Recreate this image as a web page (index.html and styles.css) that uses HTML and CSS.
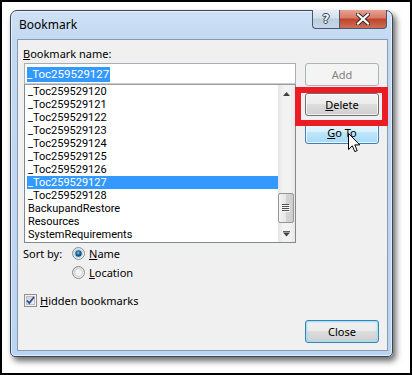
FILE: index.html
```html
<!DOCTYPE html>
<html>
<head>
<meta charset="utf-8">
<link rel="stylesheet" href="styles.css">
</head>
<body>
<div class="screen">
  <div class="window">
    <div class="titlebar">
      <span class="title">Bookmark</span>
      <div class="caption">
        <div class="cap help"><span class="qmark">?</span></div>
        <div class="cap close">
          <svg width="14" height="12" viewBox="0 0 14 12">
            <path d="M2 1.5 L12 10.5 M12 1.5 L2 10.5" stroke="#3a2a2a" stroke-width="4.2" stroke-linecap="square"/>
            <path d="M2 1.5 L12 10.5 M12 1.5 L2 10.5" stroke="#ffffff" stroke-width="2.2" stroke-linecap="square"/>
          </svg>
        </div>
      </div>
    </div>
    <div class="panel">
      <div class="name-label"><u>B</u>ookmark name:</div>
      <div class="spacer"></div>
      <div class="left">
        <div class="edit"><span class="sel">_Toc259529127</span></div>
        <div class="listbox">
          <ul class="items">
            <li>_Toc259529120</li>
            <li>_Toc259529121</li>
            <li>_Toc259529122</li>
            <li>_Toc259529123</li>
            <li>_Toc259529124</li>
            <li>_Toc259529125</li>
            <li>_Toc259529126</li>
            <li class="selected">_Toc259529127</li>
            <li>_Toc259529128</li>
            <li>BackupandRestore</li>
            <li>Resources</li>
            <li>SystemRequirements</li>
          </ul>
          <div class="scrollbar">
            <div class="arrow">
              <svg width="9" height="6" viewBox="0 0 9 6"><path d="M4.5 1 L8 5 L1 5 Z" fill="#404040"/></svg>
            </div>
            <div class="track">
              <div class="thumb">
                <svg width="8" height="8" viewBox="0 0 8 8">
                  <path d="M0 0.5 H7 M0 2.5 H7 M0 4.5 H7 M0 6.5 H7" stroke="#505050" stroke-width="1"/>
                  <path d="M1 1.5 H8 M1 3.5 H8 M1 5.5 H8 M1 7.5 H8" stroke="#ffffff" stroke-width="1" opacity="0.8"/>
                </svg>
              </div>
            </div>
            <div class="arrow">
              <svg width="9" height="6" viewBox="0 0 9 6"><path d="M1 0.5 H8" stroke="#606060"/><path d="M1 1.5 L8 1.5 L4.5 5.5 Z" fill="#404040"/></svg>
            </div>
          </div>
        </div>
        <div class="sort">
          <span class="sort-label">Sort by:</span>
          <div class="radios">
            <div class="opt">
              <svg class="radio" width="13" height="13" viewBox="0 0 13 13">
                <defs>
                  <linearGradient id="rb" x1="0" y1="0" x2="1" y2="1"><stop offset="0" stop-color="#dcdcdc"/><stop offset="1" stop-color="#ffffff"/></linearGradient>
                  <radialGradient id="dot" cx="0.45" cy="0.4" r="0.6"><stop offset="0" stop-color="#8fd0f5"/><stop offset="0.45" stop-color="#1f6ea6"/><stop offset="1" stop-color="#0d3a62"/></radialGradient>
                </defs>
                <circle cx="6.5" cy="6.5" r="6" fill="url(#rb)" stroke="#8e8f8f"/>
                <circle cx="6.5" cy="6.5" r="4.2" fill="none" stroke="#b8d7ee" stroke-width="1"/>
                <circle cx="6.5" cy="6.5" r="3.2" fill="url(#dot)"/>
              </svg>
              <span><u>N</u>ame</span>
            </div>
            <div class="opt">
              <svg class="radio" width="13" height="13" viewBox="0 0 13 13">
                <defs>
                  <linearGradient id="rb2" x1="0" y1="0" x2="1" y2="1"><stop offset="0" stop-color="#d2d2d2"/><stop offset="1" stop-color="#f8f8f8"/></linearGradient>
                </defs>
                <circle cx="6.5" cy="6.5" r="6" fill="url(#rb2)" stroke="#8e8f8f"/>
                <circle cx="6.5" cy="6.5" r="4" fill="#f2f2f2" stroke="#c9c9c9" stroke-width="0.8"/>
              </svg>
              <span><u>L</u>ocation</span>
            </div>
          </div>
        </div>
        <div class="check">
          <svg width="13" height="13" viewBox="0 0 13 13">
            <defs>
              <linearGradient id="cb" x1="0" y1="0" x2="1" y2="1"><stop offset="0" stop-color="#cbcfd5"/><stop offset="1" stop-color="#f6f6f6"/></linearGradient>
            </defs>
            <rect x="0.5" y="0.5" width="12" height="12" fill="#f4f4f4" stroke="#8e8f8f"/>
            <rect x="2.5" y="2.5" width="8" height="8" fill="url(#cb)" stroke="#b9bcc1"/>
            <path d="M3 6.5 L5.3 9 L10 3" fill="none" stroke="#2f4f8f" stroke-width="1.8"/>
          </svg>
          <span><u>H</u>idden bookmarks</span>
        </div>
      </div>
      <div class="right">
        <div class="btn disabled">Add</div>
        <div class="btn delete"><span><u>D</u>elete</span></div>
        <div class="btn hover"><span><u>G</u>o To</span></div>
        <div class="btn default">Close</div>
      </div>
    </div>
  </div>
  <div class="highlight-box"></div>
  <svg class="cursor" width="13" height="20" viewBox="0 0 13 20">
    <path d="M0.5 0.5 L0.5 16.5 L4.3 12.8 L6.8 18.6 L9.2 17.6 L6.8 11.9 L11.8 11.9 Z" fill="#ffffff" stroke="#000000" stroke-width="1" stroke-linejoin="miter"/>
  </svg>
</div>
</body>
</html>
```

FILE: styles.css
```css
html, body {
  margin: 0;
  padding: 0;
  background: #ffffff;
}

.screen {
  position: relative;
  width: 412px;
  height: 375px;
  box-sizing: border-box;
  border: 2px solid #000000;
  background: #ffffff;
  padding: 8px 0 0 8px;
  font-family: "Noto Sans", "Open Sans", sans-serif;
  font-size: 11px;
  color: #000000;
  overflow: hidden;
}

.window {
  width: 383px;
  height: 347px;
  box-sizing: border-box;
  border: 1px solid #3c4654;
  border-radius: 7px 7px 5px 5px;
  background: linear-gradient(#cfe1f5, #c2d9f2 30px, #bad5f2);
  box-shadow: inset 0 0 0 1px rgba(255, 255, 255, 0.55), 3px 4px 6px rgba(0, 0, 0, 0.6);
  padding: 0 4px 5px 6px;
  display: flex;
  flex-direction: column;
}

.titlebar {
  height: 28px;
  flex: none;
  display: flex;
  justify-content: space-between;
  align-items: flex-start;
  padding-left: 2px;
}

.title {
  margin-top: 6px;
  line-height: 15px;
  font-size: 12px;
}

.caption {
  display: flex;
  margin-top: -1px;
  margin-right: 1px;
  height: 19px;
}

.cap {
  box-sizing: border-box;
  height: 19px;
  border: 1px solid #4a5869;
  border-top: none;
  display: flex;
  align-items: center;
  justify-content: center;
}

.help {
  width: 27px;
  border-right: none;
  border-radius: 0 0 0 4px;
  background: linear-gradient(#e6eef7, #d4e0ed 45%, #bccde0 50%, #c6d7ea);
}

.qmark {
  font-family: "DejaVu Sans", sans-serif;
  font-weight: bold;
  font-size: 12px;
  line-height: 12px;
  color: #f4f6f8;
  text-shadow: 1px 0 0 #33404f, -1px 0 0 #33404f, 0 1px 0 #33404f, 0 -1px 0 #33404f;
}

.close {
  width: 48px;
  border-radius: 0 0 4px 0;
  background: linear-gradient(#e7a393, #d67a66 45%, #c0432b 50%, #cf6d55);
}

.panel {
  flex: 1;
  box-sizing: border-box;
  border: 1px solid #8a9bb0;
  background: #f0f0f0;
  display: grid;
  grid-template-columns: 272px 74px;
  grid-template-rows: 15px 1fr;
  column-gap: 9px;
  row-gap: 2px;
  padding: 6px 8px 7px 6px;
}

.name-label {
  margin-left: -1px;
  line-height: 15px;
}

.left {
  display: flex;
  flex-direction: column;
}

.edit {
  height: 21px;
  box-sizing: border-box;
  border: 1px solid #abadb3;
  border-bottom-color: #c9cbd0;
  background: #ffffff;
  padding: 2px 0 0 2px;
}

.sel {
  display: inline-block;
  line-height: 15px;
  background: #3399ff;
  color: #ffffff;
  padding-right: 1px;
  font-family: Roboto, "Noto Sans", sans-serif;
  font-size: 11.5px;
}

.listbox {
  height: 159px;
  box-sizing: border-box;
  border: 1px solid #828790;
  border-top-color: #9a9ea6;
  background: #ffffff;
  display: flex;
}

.items {
  list-style: none;
  margin: 0;
  padding: 0 0 0 2px;
  flex: 1;
  font-family: Roboto, "Noto Sans", sans-serif;
  font-size: 11px;
}

.items li {
  height: 13px;
  line-height: 13px;
  padding-left: 1px;
  white-space: nowrap;
}

.items li.selected {
  background: #3399ff;
  color: #ffffff;
}

.scrollbar {
  width: 17px;
  display: flex;
  flex-direction: column;
  background: linear-gradient(90deg, #e4e4e4, #f2f2f2 30%, #f2f2f2 70%, #e8e8e8);
}

.arrow {
  height: 17px;
  display: flex;
  align-items: center;
  justify-content: center;
}

.track {
  flex: 1;
  display: flex;
  flex-direction: column;
  justify-content: flex-end;
  padding-bottom: 2px;
}

.thumb {
  height: 30px;
  box-sizing: border-box;
  margin: 0 1px 0 0;
  border: 1px solid #979797;
  border-radius: 2px;
  background: linear-gradient(90deg, #f4f4f4, #e6e6e6 50%, #d4d4d4 52%, #cdcdcd);
  display: flex;
  align-items: center;
  justify-content: center;
}

.sort {
  margin-top: 3px;
  display: flex;
  align-items: flex-start;
}

.sort-label {
  width: 49px;
  margin-left: -1px;
  line-height: 15px;
}

.radios {
  display: flex;
  flex-direction: column;
  gap: 4px;
}

.opt {
  display: flex;
  align-items: center;
  gap: 4px;
  height: 15px;
  line-height: 15px;
}

.check {
  margin-top: 13px;
  display: flex;
  align-items: center;
  gap: 3px;
  height: 15px;
  line-height: 15px;
}

.right {
  display: flex;
  flex-direction: column;
}

.btn {
  height: 23px;
  box-sizing: border-box;
  border: 1px solid #707070;
  border-radius: 3px;
  display: flex;
  align-items: center;
  justify-content: center;
  line-height: 15px;
  background: linear-gradient(#f2f2f2, #ebebeb 48%, #dddddd 50%, #cfcfcf);
  box-shadow: inset 0 0 0 1px rgba(255, 255, 255, 0.75);
}

.btn.disabled {
  border-color: #adb2b5;
  background: #f4f4f4;
  color: #838383;
  box-shadow: none;
}

.btn.delete {
  margin-top: 7px;
}

.btn.hover {
  margin-top: 5px;
  border-color: #3c7fb1;
  background: linear-gradient(#eaf6fd, #d9f0fc 48%, #bee6fd 50%, #a7d9f5);
}

.btn.default {
  margin-top: auto;
  border-color: #3c7fb1;
  box-shadow: inset 0 0 0 1px #9fe4fb, inset 0 0 2px 1px rgba(120, 210, 250, 0.6);
}

.highlight-box {
  position: absolute;
  left: 293px;
  top: 85px;
  width: 93px;
  height: 39px;
  box-sizing: border-box;
  border: 6px solid #ec1c24;
}

.cursor {
  position: absolute;
  left: 346px;
  top: 131px;
}
```
